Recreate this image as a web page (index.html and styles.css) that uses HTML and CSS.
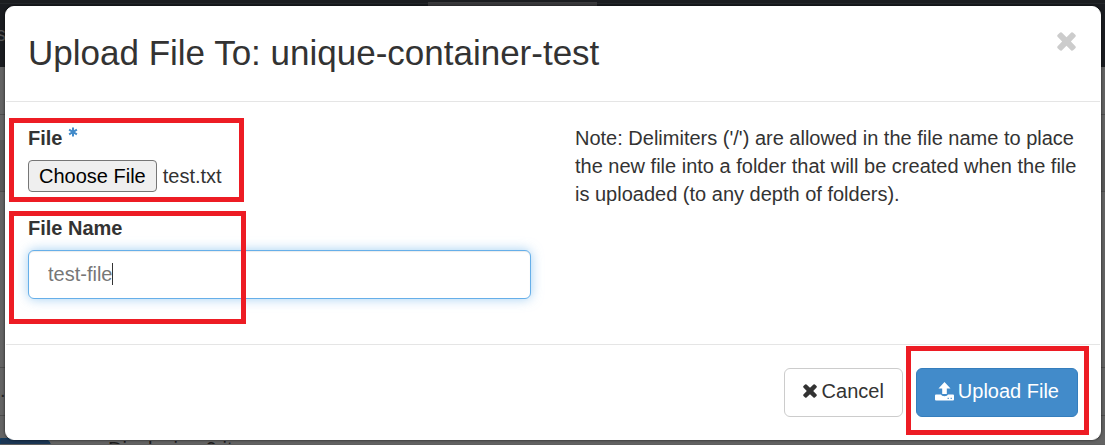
FILE: index.html
```html
<!DOCTYPE html>
<html lang="en">
<head>
<meta charset="utf-8">
<title>Upload File</title>
<link rel="stylesheet" href="styles.css">
</head>
<body>
<div class="backdrop" aria-hidden="true">
  <div class="topbar"><span class="tab"></span><span class="brand">s</span></div>
  <div class="rows">
    <div class="row row-head"></div>
    <div class="row row-gap"></div>
    <div class="row row-dark"></div>
    <div class="row row-tall"></div>
    <div class="row row-item">.</div>
    <div class="row-foot"><span class="primary"></span><span class="count">Displaying 9 items</span></div>
  </div>
</div>
<form class="modal" role="dialog" aria-labelledby="title">
  <header class="modal-header">
    <h1 id="title" class="modal-title">Upload File To: unique-container-test</h1>
    <button type="button" class="close" aria-label="Close">
      <svg class="close-icon" viewBox="0 0 20 20"><path d="M5 .6 10 5.4 15 .6Q16 -.2 17 .7L19.3 3Q20.2 4 19.4 5L14.6 10 19.4 15Q20.2 16 19.3 17L17 19.3Q16 20.2 15 19.4L10 14.6 5 19.4Q4 20.2 3 19.3L.7 17Q-.2 16 .6 15L5.4 10 .6 5Q-.2 4 .7 3L3 .7Q4 -.2 5 .6Z"/></svg>
    </button>
  </header>
  <div class="modal-body">
    <div class="fields">
      <div class="field marked mark-file">
        <label class="label" for="file">File
          <svg class="required" viewBox="0 0 10 10"><path d="M5 .5V9.5M1.1 2.7 8.9 7.3M8.9 2.7 1.1 7.3"/></svg>
        </label>
        <input class="file" id="file" type="file">
      </div>
      <div class="field marked mark-name">
        <label class="label" for="name">File Name</label>
        <div class="text-wrap">
          <input class="text" id="name" type="text" value="test-file">
        </div>
      </div>
    </div>
    <p class="note">Note: Delimiters ('/') are allowed in the file name to place the new file into a folder that will be created when the file is uploaded (to any depth of folders).</p>
  </div>
  <footer class="modal-footer">
    <button type="button" class="btn">
      <svg class="icon-x" viewBox="0 0 20 20"><path d="M5 .6 10 5.4 15 .6Q16 -.2 17 .7L19.3 3Q20.2 4 19.4 5L14.6 10 19.4 15Q20.2 16 19.3 17L17 19.3Q16 20.2 15 19.4L10 14.6 5 19.4Q4 20.2 3 19.3L.7 17Q-.2 16 .6 15L5.4 10 .6 5Q-.2 4 .7 3L3 .7Q4 -.2 5 .6Z"/></svg>
      Cancel</button>
    <span class="marked mark-upload">
      <button type="submit" class="btn btn-primary">
        <svg class="icon-upload" viewBox="0 0 19 19"><path fill-rule="evenodd" d="M9.5 0 15.5 6.5H11.8V12H7.2V6.5H3.5ZM1 12.6H6Q6.5 14.2 9.5 14.2 12.5 14.2 13 12.6H18Q19 12.6 19 13.6V17.6Q19 18.6 18 18.6H1Q0 18.6 0 17.6V13.6Q0 12.6 1 12.6ZM12.6 15.8V17H13.8V15.8ZM15.6 15.8V17H16.8V15.8Z"/></svg>
        Upload File</button>
    </span>
  </footer>
</form>
<script src="main.js"></script>
</body>
</html>
```

FILE: styles.css
```css
*, *::before, *::after { box-sizing: border-box; }

html { background: #5f5f5f; }

body {
  margin: 0;
  padding: 6px 4px 4px 5px;
  position: relative;
  overflow: hidden;
  color: #333;
  font: 20px/28px "Liberation Sans", Arial, sans-serif;
}

/* Dimmed page behind the dialog */
.backdrop {
  position: absolute;
  inset: 0;
  height: 100vh;
  overflow: hidden;
  background: #636363;
}
.topbar {
  height: 67px;
  background: linear-gradient(#1b1d20 0 3px, #24272a 3px 4px, #1a1c20 4px);
}
.tab {
  display: block;
  width: 169px;
  height: 4px;
  margin: 0 auto;
  position: relative;
  top: 2px;
  left: -40px;
  background: #3a3a3c;
}
.brand { display: block; padding-top: 16px; margin-left: -4px; color: #555; }
.row { border-bottom: 1px solid #4d4d4d; }
.row-head { height: 48px; }
.row-gap { height: 25px; border: 0; }
.row-dark { height: 52px; background: #595959; }
.row-tall { height: 176px; }
.row-item { height: 48px; color: #222; padding-top: 8px; }
.row-foot { display: flex; gap: 57px; padding-top: 19px; color: #1c1c1c; }
.primary {
  width: 51px;
  height: 40px;
  margin-top: 3px;
  background: #1b3654;
  border: 1px solid #123a5c;
  border-radius: 0 8px 0 0;
}

.modal {
  position: relative;
  background: #fff;
  border: 1px solid #fff;
  border-radius: 9px;
  box-shadow: 0 0 3px rgba(0, 0, 0, 0.7);
}

.modal-header {
  display: flex;
  justify-content: space-between;
  align-items: flex-start;
  padding: 21px 22px 23px;
  border-bottom: 1px solid #e5e5e5;
}
.modal-title { margin: 0; font-size: 35px; line-height: 50px; font-weight: 400; }
.close { padding: 4px 2px; border: 0; background: none; line-height: 0; }
.close-icon { width: 19px; height: 19px; fill: #ccc; }

.modal-body {
  display: grid;
  grid-template-columns: 1fr 1fr;
  gap: 44px;
  padding: 22px 22px 45px;
}
.fields { display: flex; flex-direction: column; gap: 22px; }
.field { display: flex; flex-direction: column; gap: 8px; }
.label { height: 28px; font-weight: 700; }
.required {
  width: 10px;
  height: 10px;
  vertical-align: 8px;
  fill: none;
  stroke: #428bca;
  stroke-width: 2;
}

.file { width: 100%; height: 32px; font: inherit; color: inherit; }
.file::file-selector-button {
  height: 32px;
  margin: 0 6px 0 0;
  padding: 0 10px;
  border: 1px solid #767676;
  border-radius: 4px;
  background: #efefef;
  color: #000;
  font: inherit;
}

.text-wrap { position: relative; }
.text {
  display: block;
  width: 100%;
  height: 49px;
  padding: 0 19px;
  border: 1px solid #66afe9;
  border-radius: 6px;
  outline: 0;
  background: #fff;
  color: #777;
  caret-color: transparent;
  font: inherit;
  box-shadow: inset 0 1px 1px rgba(0, 0, 0, 0.08), 0 0 12px rgba(102, 175, 233, 0.6);
}
/* Steady caret after the suggested name */
.text-wrap::after {
  content: "";
  position: absolute;
  left: 84px;
  top: 13px;
  width: 1px;
  height: 22px;
  background: #333;
}

.note { margin: 0; }

.modal-footer {
  display: flex;
  justify-content: flex-end;
  gap: 13px;
  padding: 23px 22px 22px;
  border-top: 1px solid #e5e5e5;
}
.btn {
  display: flex;
  align-items: center;
  gap: 5px;
  height: 49px;
  padding: 0 18px 3px;
  border: 1px solid #ccc;
  border-radius: 6px;
  background: #fff;
  color: #333;
  font: inherit;
}
.btn-primary { gap: 4px; background: #428bca; border-color: #357ebd; color: #fff; }
.icon-x { width: 14px; height: 14px; fill: #333; }
.icon-upload { width: 19px; height: 19px; fill: #fff; }

/* Red callout frames drawn over the controls */
.marked { position: relative; }
.marked::after {
  content: "";
  position: absolute;
  z-index: 1;
  border: 5px solid #ed1c24;
  pointer-events: none;
}
.mark-file::after { left: -19px; top: -6px; bottom: -10px; width: 235px; }
.mark-name::after { left: -19px; top: -3px; bottom: -25px; width: 237px; }
.mark-upload::after { inset: -22px -11px -18px -10px; }
```

FILE: main.js
```js
// Preselect the sample file.
const transfer = new DataTransfer();
transfer.items.add(new File(["test"], "test.txt", { type: "text/plain" }));
document.getElementById("file").files = transfer.files;
```
